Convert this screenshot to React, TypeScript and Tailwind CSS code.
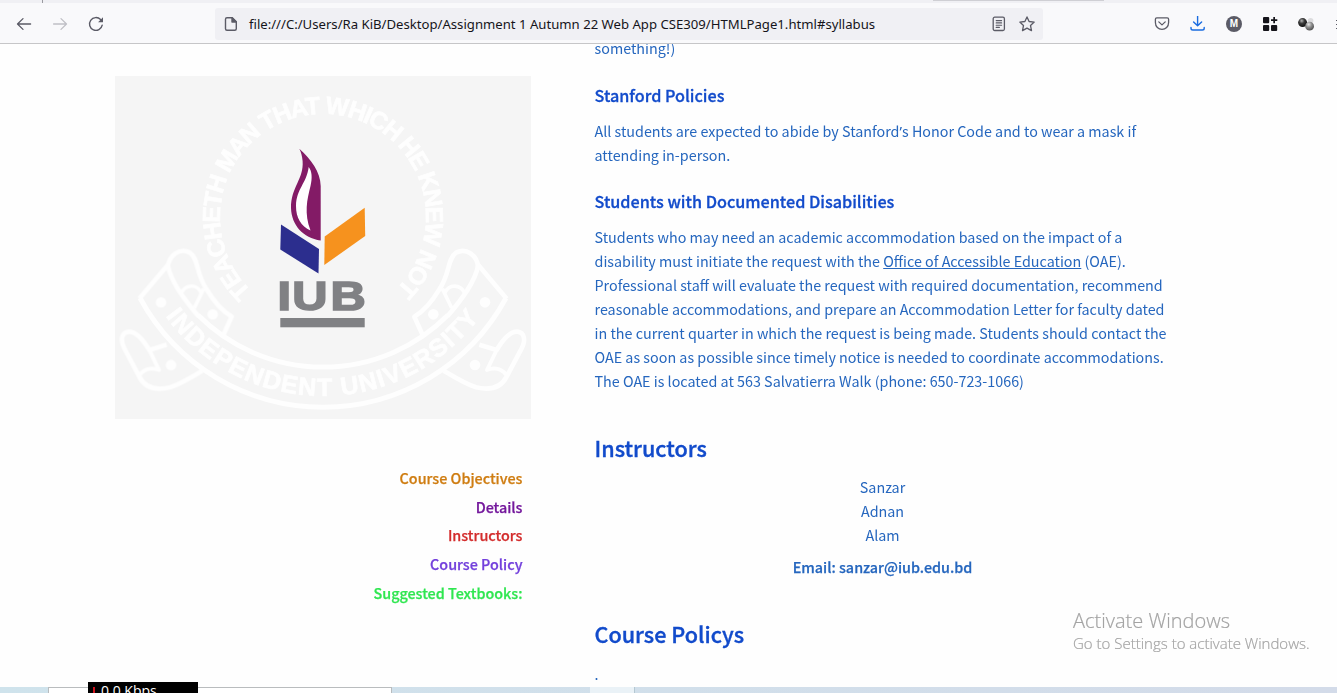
const navLinks = [
  { label: "Course Objectives", color: "text-[#cf7d12]" },
  { label: "Details", color: "text-[#74189c]" },
  { label: "Instructors", color: "text-[#d32d2d]" },
  { label: "Course Policy", color: "text-[#7340dc]" },
  { label: "Suggested Textbooks:", color: "text-[#2fe650]" },
];

function RibbonEnd() {
  return (
    <>
      <g fill="none" stroke="#fff" strokeWidth="14" strokeLinejoin="round">
        <path d="M158 75 L73 176" />
        <path d="M158 85 C160 45 195 22 225 38 C252 58 242 100 275 148 C300 190 325 215 350 230 L322 292" />
        <path d="M158 75 C168 125 205 175 250 228" />
        <path d="M200 157 C212 134 245 130 258 158 M266 146 L238 204" strokeWidth="11" />
        <path d="M155 314 L103 330 C85 300 62 273 40 275 C18 279 16 302 28 325 L73 410 C92 448 130 450 165 442 C200 430 235 408 262 392" />
        <path d="M103 330 L132 390 C115 383 92 383 74 404" strokeWidth="12" />
      </g>
      <g fill="#fff">
        <circle cx="138" cy="187" r="16" />
        <circle cx="293" cy="223" r="16" />
        <circle cx="168" cy="375" r="16" />
      </g>
    </>
  );
}

function UniversityLogo() {
  return (
    <svg className="block h-[343px] w-[416px] bg-[#f5f5f5]" viewBox="115 76 416 343">
      <defs>
        <path id="motto" d="M251.5 291.1 A103 103 0 1 1 394.5 291.1" />
        <path id="ribbon" d="M165.5 316 A195 195 0 0 0 480.5 316" />
      </defs>
      <g opacity="0.85">
        <g transform="translate(115 240) scale(0.33333)">
          <RibbonEnd />
        </g>
        <g transform="translate(531 240) scale(-0.33333 0.33333)">
          <RibbonEnd />
        </g>
        <g fill="none" stroke="#fff" strokeWidth="5">
          <path d="M140 298 A208 208 0 0 0 506 298" />
          <path d="M198 315 A176 176 0 0 0 448 315" />
        </g>
        <g fill="#fff" stroke="#fff" strokeWidth="0.7" fontFamily="Liberation Sans, sans-serif" fontWeight="700">
          <text fontSize="24.5">
            <textPath href="#motto" textLength="486" lengthAdjust="spacing">TEACHETH MAN THAT WHICH HE KNEW NOT</textPath>
          </text>
          <text fontSize="25">
            <textPath href="#ribbon" textLength="364" lengthAdjust="spacing">INDEPENDENT UNIVERSITY</textPath>
          </text>
        </g>
      </g>
      <path
        fill="#831b66"
        d="M299.3 148.7 C311 159 320.5 172 320.7 186 L320.7 240.5 C303 238 291.5 225 291 208 C290.8 187 304 179 302.6 161 C302.2 156 301 152 299.3 148.7 Z"
      />
      <path fill="#fff" d="M308.7 167 C306.5 184 296.5 188 296 206 C296 218 301 226 310.5 230.5 C304 213 307 200 310.5 186 C312.5 178 312 171 308.7 167 Z" />
      <path fill="#2c2e8e" d="M281 224.5 L319 249 L318.5 273.5 L280.3 249.5 Z" />
      <path fill="#f6921e" d="M324.7 236.5 L364.7 207.7 L365.2 236 L324.3 265 Z" />
      <text
        transform="translate(0 309.6) scale(1.22 1)"
        x="227.4 239.6 271"
        fontFamily="Liberation Sans, sans-serif"
        fontWeight="700"
        fontSize="40"
        fill="#808184"
        stroke="#808184"
        strokeWidth="1.6"
      >
        IUB
      </text>
      <rect x="280.3" y="318" width="84.4" height="9.3" fill="#808184" />
    </svg>
  );
}

function BrowserBar() {
  return (
    <header className="flex h-11 shrink-0 flex-col border-b border-[#c6c6c8] bg-[#f9f9fb]">
      <div className="flex h-[3px] shrink-0 bg-[#f0f0f4]">
        <div className="ml-[42px] h-[3px] w-px bg-[#9a9aa0]" />
        <div className="ml-[890px] h-px w-[171px] bg-[#cfcfd4]" />
      </div>
      <div className="flex flex-1 items-center pb-0.5 pt-1">
        <svg className="ml-4 h-4 w-4" viewBox="0 0 16 16" fill="none" stroke="#5b5b66" strokeWidth="1.3" strokeLinecap="round" strokeLinejoin="round">
          <path d="M14.6 8 H1.6 M7 2.6 L1.5 8 L7 13.4" />
        </svg>
        <svg className="ml-5 h-4 w-4" viewBox="0 0 16 16" fill="none" stroke="#c0c0c6" strokeWidth="1.3" strokeLinecap="round" strokeLinejoin="round">
          <path d="M1.6 8 H14.4 M9 2.6 L14.5 8 L9 13.4" />
        </svg>
        <svg className="ml-5 h-4 w-4" viewBox="0 0 16 16" fill="none" stroke="#5b5b66" strokeWidth="1.4" strokeLinecap="round">
          <path d="M14.2 9.2 A6.4 6.4 0 1 1 12.6 3.6" />
          <path d="M15 1.3 V6.2 H10.1 Z" fill="#5b5b66" stroke="none" />
        </svg>
        <div className="ml-[111px] flex h-8 w-[828px] items-center rounded-[3px] bg-[#f0f0f4]">
          <svg className="ml-2 h-4 w-4" viewBox="0 0 16 16" fill="none" stroke="#5b5b66" strokeWidth="1.4" strokeLinejoin="round">
            <path d="M4 1.7 H9.3 L13.3 5.7 V12.8 Q13.3 14.3 11.8 14.3 H4 Q2.5 14.3 2.5 12.8 V3.2 Q2.5 1.7 4 1.7 Z" />
            <path d="M9 1.7 L13.3 6 H9 Z" fill="#5b5b66" />
          </svg>
          <span className="ml-2.5 whitespace-nowrap font-['Noto_Sans',sans-serif] text-[13.15px] leading-5 text-[#15141a]">
            file:///C:/Users/Ra KiB/Desktop/Assignment 1 Autumn 22 Web App CSE309/HTMLPage1.html#syllabus
          </span>
          <svg className="ml-auto h-4 w-4" viewBox="0 0 16 16" fill="none" stroke="#5b5b66" strokeWidth="1.3" strokeLinecap="round">
            <rect x="2.2" y="1.2" width="11.2" height="13.3" rx="1.5" />
            <path d="M5.2 4.6 H10.6 M5.2 6.9 H10.6 M5.2 9.2 H10.6 M5.2 11.4 H8.4" strokeWidth="1.1" />
          </svg>
          <svg className="ml-3 mr-2 h-4 w-4" viewBox="0 0 16 16" fill="none" stroke="#5b5b66" strokeWidth="1.3" strokeLinejoin="round">
            <path d="M8 0.9 L10.1 5.5 L15.2 6.1 L11.5 9.5 L12.5 14.6 L8 12.1 L3.5 14.6 L4.5 9.5 L0.8 6.1 L5.9 5.5 Z" />
          </svg>
        </div>
        <svg className="ml-[111px] h-4 w-4" viewBox="0 0 16 16" fill="none" stroke="#5b5b66" strokeWidth="1.3" strokeLinecap="round" strokeLinejoin="round">
          <path d="M2.8 1.9 H13.2 Q14.6 1.9 14.6 3.3 V6.5 C14.6 10.8 11.6 13.4 8 13.4 C4.4 13.4 1.4 10.8 1.4 6.5 V3.3 Q1.4 1.9 2.8 1.9 Z M4.8 5.9 L8 8.9 L11.2 5.9" />
        </svg>
        <svg className="ml-5 h-4 w-4" viewBox="0 0 16 16" fill="none" stroke="#1a6ce0" strokeWidth="1.4" strokeLinecap="round" strokeLinejoin="round">
          <path d="M7.6 0 V9.5 M3.6 5.9 L7.6 9.8 L11.6 5.9 M1 11.4 V12.2 Q1 14 2.8 14 H12.4 Q14.2 14 14.2 12.2 V11.4" />
        </svg>
        <div className="ml-5 flex h-4 w-4 items-center justify-center rounded-full bg-[#5b5b66] font-['Liberation_Sans',sans-serif] text-[10px] font-bold leading-none text-white">
          M
        </div>
        <svg className="ml-5 h-4 w-4" viewBox="0 0 16 16" fill="#15141a">
          <rect x="1" y="1" width="6.2" height="6.2" rx="1" />
          <rect x="1" y="8.9" width="6.2" height="6.2" rx="1" />
          <rect x="9" y="8.9" width="6.2" height="6.2" rx="1" />
          <path d="M11.3 1 h1.7 v2.3 h2.3 v1.7 h-2.3 v2.3 h-1.7 v-2.3 h-2.3 v-1.7 h2.3 Z" />
        </svg>
        <svg className="ml-5 h-4 w-4" viewBox="0 0 16 16">
          <defs>
            <radialGradient id="darkBall" cx="0.4" cy="0.3" r="0.65">
              <stop offset="0" stopColor="#b5b5b5" />
              <stop offset="0.45" stopColor="#3c3c3c" />
              <stop offset="1" stopColor="#151515" />
            </radialGradient>
            <radialGradient id="greyBall" cx="0.4" cy="0.3" r="0.7">
              <stop offset="0" stopColor="#e6e6e6" />
              <stop offset="0.5" stopColor="#8b8b8b" />
              <stop offset="1" stopColor="#505050" />
            </radialGradient>
          </defs>
          <circle cx="12.6" cy="4.7" r="2.8" fill="#dcdcde" />
          <circle cx="4.6" cy="6.6" r="4.5" fill="url(#darkBall)" />
          <circle cx="11.6" cy="10.2" r="4.4" fill="url(#greyBall)" />
        </svg>
        <div className="ml-[22px] flex w-px flex-col gap-[3px]">
          <div className="h-px bg-[#5b5b66]" />
          <div className="h-px bg-[#5b5b66]" />
          <div className="h-px bg-[#5b5b66]" />
        </div>
      </div>
    </header>
  );
}

export default function App() {
  return (
    <div className="relative flex h-[693px] w-[1337px] flex-col overflow-hidden bg-white font-['Noto_Sans_CJK_SC',sans-serif]">
      <BrowserBar />
      <main className="flex min-h-0 flex-1 overflow-hidden bg-[#fefefe]">
        <aside className="ml-[115px] mt-8 w-[416px]">
          <UniversityLogo />
          <nav className="mt-[45px] flex flex-col items-end pr-[8.5px]">
            {navLinks.map((link) => (
              <a key={link.label} className={`h-[28.7px] text-[14.35px] font-medium leading-7 [-webkit-text-stroke:0.25px] ${link.color}`}>
                {link.label}
              </a>
            ))}
          </nav>
        </aside>
        <article className="-mt-2 ml-[63.5px] w-[576px] text-[14.33px] leading-6 text-[#2566be]">
          <p>something!)</p>
          <h3 className="mt-[23px] text-[16.2px] font-medium leading-6 text-[#124bcb] [-webkit-text-stroke:0.3px]">Stanford Policies</h3>
          <p className="mt-3 whitespace-nowrap">
            All students are expected to abide by Stanford<span className="font-['Noto_Sans',sans-serif] leading-none">’</span>s Honor Code and to wear a mask if
            <br />
            attending in-person.
          </p>
          <h3 className="mt-[22px] text-[16.2px] font-medium leading-6 text-[#124bcb] [-webkit-text-stroke:0.3px]">Students with Documented Disabilities</h3>
          <p className="mt-3 whitespace-nowrap">
            Students who may need an academic accommodation based on the impact of a
            <br />
            disability must initiate the request with the{" "}
            <a className="underline decoration-1 underline-offset-1">Office of Accessible Education</a> (OAE).
            <br />
            Professional staff will evaluate the request with required documentation, recommend
            <br />
            reasonable accommodations, and prepare an Accommodation Letter for faculty dated
            <br />
            in the current quarter in which the request is being made. Students should contact the
            <br />
            OAE as soon as possible since timely notice is needed to coordinate accommodations.
            <br />
            The OAE is located at 563 Salvatierra Walk (phone: 650-723-1066)
          </p>
          <h2 className="mt-[39px] text-[21.6px] font-medium leading-8 text-[#124bcb] [-webkit-text-stroke:0.35px]">Instructors</h2>
          <ul className="mt-[11px] text-center">
            <li>Sanzar</li>
            <li>Adnan</li>
            <li>Alam</li>
          </ul>
          <p className="mt-2 text-center text-[14.37px] font-medium [-webkit-text-stroke:0.25px]">Email: sanzar@iub.edu.bd</p>
          <h2 className="mt-[39px] text-[21.6px] font-medium leading-8 text-[#124bcb] [-webkit-text-stroke:0.35px]">Course Policys</h2>
          <p className="mt-[11px] leading-[25px]">.</p>
        </article>
      </main>
      <footer className="flex h-1.5 shrink-0 bg-linear-to-r from-[#cfe3ec] to-[#d3dbe9]">
        <div className="ml-12 h-1.5 w-[344px] border-x border-t border-[#b9bcbe] bg-white" />
        <div className="ml-[198px] h-1.5 w-[45px] border-r border-[#b5c8d2] bg-[#eaf2f7]" />
      </footer>
      <div className="absolute left-[88px] top-[682px] flex h-[11px] w-[110px] overflow-hidden bg-black">
        <div className="ml-[5px] mt-[5px] h-1.5 w-0.5 bg-[#d0111b]" />
        <span className="ml-1.5 font-['Open_Sans',sans-serif] text-[14px] leading-[18px] text-white">0.0 Kbps</span>
      </div>
      <div className="absolute left-[1073px] top-[608px] whitespace-nowrap font-['Open_Sans',sans-serif] font-light text-[#a3a3a3]">
        <div className="text-[20px] leading-[26px] [-webkit-text-stroke:0.2px]">Activate Windows</div>
        <div className="-mt-px text-[15px] leading-5 [-webkit-text-stroke:0.2px]">Go to Settings to activate Windows.</div>
      </div>
    </div>
  );
}
